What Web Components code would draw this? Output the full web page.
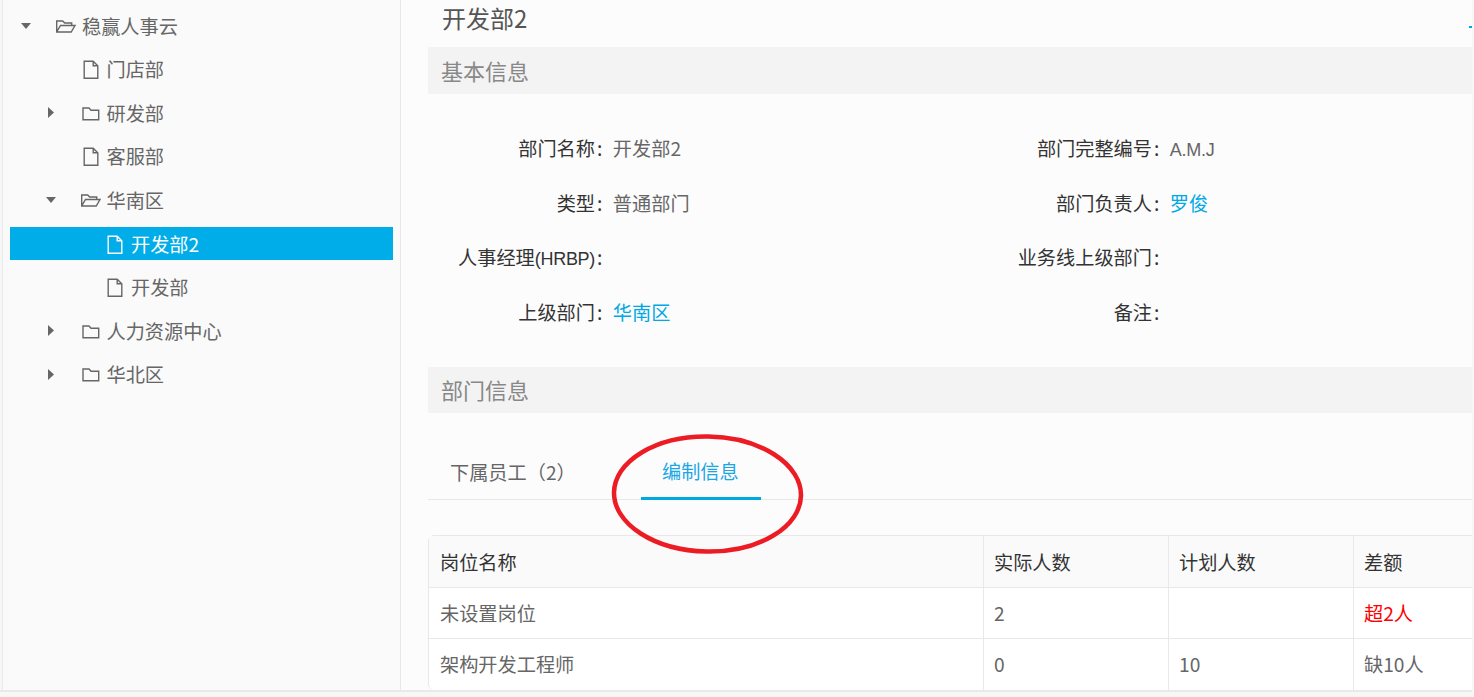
<!DOCTYPE html>
<html>
<head>
<meta charset="utf-8">
<style>
  html, body { margin: 0; height: 100%; overflow: hidden; }
  body {
    background: #f7f7f7;
    font-family: "Noto Sans CJK SC", "Liberation Sans", sans-serif;
    font-size: 19.2px;
    color: #666;
  }
</style>
</head>
<body>
<org-page>
  <org-tree slot="tree">
    <tree-node icon="open" arrow="down" level="0">稳赢人事云</tree-node>
    <tree-node icon="file" level="1">门店部</tree-node>
    <tree-node icon="folder" arrow="right" level="1">研发部</tree-node>
    <tree-node icon="file" level="1">客服部</tree-node>
    <tree-node icon="open" arrow="down" level="1">华南区</tree-node>
    <tree-node icon="file" level="2" selected>开发部2</tree-node>
    <tree-node icon="file" level="2">开发部</tree-node>
    <tree-node icon="folder" arrow="right" level="1">人力资源中心</tree-node>
    <tree-node icon="folder" arrow="right" level="1">华北区</tree-node>
  </org-tree>
  <dept-detail slot="detail"></dept-detail>
</org-page>

<script>
class OrgPage extends HTMLElement {
  constructor() {
    super();
    this.attachShadow({ mode: "open" });
    this.shadowRoot.innerHTML = `
      <style>
        :host { display: flex; height: 690px; width: 1472px; overflow: hidden; border-bottom: 2px solid #e9e9e9; }
        .side { width: 397px; flex: none; margin-left: 2px; background: #fafafa;
                border-left: 1px solid #e8e8e8; border-right: 1px solid #e8e8e8; }
        .main { flex: 1; min-width: 0; overflow: hidden; background: #fcfcfc; }
      </style>
      <div class="side"><slot name="tree"></slot></div>
      <div class="main"><slot name="detail"></slot></div>
    `;
  }
}
customElements.define("org-page", OrgPage);

class OrgTree extends HTMLElement {
  constructor() {
    super();
    this.attachShadow({ mode: "open" });
    this.shadowRoot.innerHTML = `
      <style>
        :host { display: flex; flex-direction: column; gap: 10.6px; padding: 9.2px 7px 0 7px; }
      </style>
      <slot></slot>
    `;
  }
}
customElements.define("org-tree", OrgTree);

const treeIcons = {
  open: `<path d="M.7 16V5h6l2 2h7v2.5M.7 16h14.5L19 9.5H4.5L.7 16z"/>`,
  folder: `<path d="M2 5h6l2 2.2h7.7v9.6H2z"/>`,
  file: `<path d="M3.2 2.2h9l4.6 4.6v12.5H3.2zM12.2 2.2v4.6h4.6"/>`,
};

class TreeNode extends HTMLElement {
  constructor() {
    super();
    this.attachShadow({ mode: "open" });
  }

  connectedCallback() {
    const level = Number(this.getAttribute("level"));
    const icon = this.getAttribute("icon");
    const arrow = this.getAttribute("arrow");
    let arrowSvg = "";
    if (arrow === "down") arrowSvg = `<svg width="10" height="6" viewBox="0 0 10 6"><path d="M0 0h10L5 6z" fill="#666"/></svg>`;
    if (arrow === "right") arrowSvg = `<svg width="6" height="11" viewBox="0 0 6 11"><path d="M0 0l6 5.5L0 11z" fill="#666"/></svg>`;
    this.shadowRoot.innerHTML = `
      <style>
        :host { display: flex; align-items: center; height: 33px; color: #666; padding-left: ${level * 24.5}px; }
        :host([selected]) { background: #00ade8; color: #fff; }
        .arrow { width: 18px; margin-left: 7px; display: flex; justify-content: center; flex: none; }
        .icon { width: 26px; margin-left: 21px; display: flex; flex: none; }
        svg.i { fill: none; stroke: currentColor; stroke-width: 1.4; }
      </style>
      <span class="arrow">${arrowSvg}</span>
      <span class="icon"><svg class="i" width="22" height="20" viewBox="0 0 22 20">${treeIcons[icon]}</svg></span>
      <span class="label"><slot></slot></span>
    `;
  }
}
customElements.define("tree-node", TreeNode);

class SectionBar extends HTMLElement {
  constructor() {
    super();
    this.attachShadow({ mode: "open" });
    this.shadowRoot.innerHTML = `
      <style>
        :host { display: flex; align-items: center; box-sizing: border-box; height: 47px; padding: 0 0 2px 13px;
                background: #f3f3f3; color: #888; font-size: 22px; }
      </style>
      <slot></slot>
    `;
  }
}
customElements.define("section-bar", SectionBar);

class InfoField extends HTMLElement {
  constructor() {
    super();
    this.attachShadow({ mode: "open" });
    this.shadowRoot.innerHTML = `
      <style>
        :host { display: flex; align-items: center; box-sizing: border-box; height: 54.5px; padding-bottom: 2px; }
        .label { width: var(--label-w); text-align: right; color: #333; flex: none; }
        .colon { margin: 0 10.5px 0 2px; color: #333; }
        .value { color: #666; }
        :host([link]) .value { color: #00a8e6; }
      </style>
      <span class="label"><slot name="label"></slot></span><span class="colon">:</span>
      <span class="value"><slot></slot></span>
    `;
  }
}
customElements.define("info-field", InfoField);

class TabBar extends HTMLElement {
  constructor() {
    super();
    this.attachShadow({ mode: "open" });
    this.shadowRoot.innerHTML = `
      <style>
        :host { display: flex; height: 52px; border-bottom: 1px solid #e8e8e8; }
        .tab { width: 213px; box-sizing: border-box; padding: 11px 0 0 22px; color: #666; flex: none; }
        .tab.on { width: 120px; padding: 10px 0 0 21px; color: #1ba6e6; height: 53px; border-bottom: 3px solid #00a8e0; }
      </style>
      <div class="tab">下属员工（2）</div>
      <div class="tab on">编制信息</div>
    `;
  }
}
customElements.define("tab-bar", TabBar);

class StaffTable extends HTMLElement {
  constructor() {
    super();
    this.attachShadow({ mode: "open" });
    this.shadowRoot.innerHTML = `
      <style>
        :host { display: block; width: 1110px; }
        .wrap { display: grid; grid-template-columns: 555px 185px 185px 185px; background: #fff;
                border: 1px solid #e8e8e8; border-bottom: 0; border-radius: 6px 0 6px 6px; color: #666; }
        .c { height: 51px; box-sizing: border-box; padding: 0 10px; display: flex; align-items: center;
             border-bottom: 1px solid #e8e8e8; border-right: 1px solid #e8e8e8; }
        .first { padding-left: 11px; }
        .h { background: #fafafa; color: #333; height: 52px; }
        .last { border-bottom: 0; padding-bottom: 2px; }
        .red { color: #f00; }
      </style>
      <div class="wrap">
        <div class="c h first">岗位名称</div><div class="c h">实际人数</div><div class="c h">计划人数</div><div class="c h">差额</div>
        <div class="c first">未设置岗位</div><div class="c">2</div><div class="c"></div><div class="c red">超2人</div>
        <div class="c last first">架构开发工程师</div><div class="c last">0</div><div class="c last">10</div><div class="c last">缺10人</div>
      </div>
    `;
  }
}
customElements.define("staff-table", StaffTable);

class DeptDetail extends HTMLElement {
  constructor() {
    super();
    this.attachShadow({ mode: "open" });
    this.shadowRoot.innerHTML = `
      <style>
        :host { display: block; position: relative; padding-left: 27px; height: 100%; }
        .title { height: 47px; padding-left: 14px; font-size: 24px; color: #555; line-height: 36px; }
        .grid { display: grid; grid-template-columns: 552px 1fr; padding: 28px 0 27px; }
        .c1 { --label-w: 167px; }
        .c2 { --label-w: 172px; }
        .latin { font-family: "Liberation Sans", sans-serif; font-size: 18px; letter-spacing: -0.3px; }
        section-bar.second { height: 46px; }
        tab-bar { margin-top: 34px; }
        staff-table { margin-top: 35px; }
        .mark { position: absolute; left: 209px; top: 434px; pointer-events: none; }
        .dash { position: absolute; right: 0; top: 26px; width: 3px; height: 2px; background: #00a8e6; }
      </style>
      <div class="title">开发部2</div>
      <div class="dash"></div>
      <section-bar>基本信息</section-bar>
      <div class="grid">
        <info-field class="c1"><span slot="label">部门名称</span>开发部2</info-field>
        <info-field class="c2"><span slot="label">部门完整编号</span><span class="latin">A.M.J</span></info-field>
        <info-field class="c1"><span slot="label">类型</span>普通部门</info-field>
        <info-field class="c2" link><span slot="label">部门负责人</span>罗俊</info-field>
        <info-field class="c1"><span slot="label">人事经理<span class="latin">(HRBP)</span></span></info-field>
        <info-field class="c2"><span slot="label">业务线上级部门</span></info-field>
        <info-field class="c1" link><span slot="label">上级部门</span>华南区</info-field>
        <info-field class="c2"><span slot="label">备注</span></info-field>
      </div>
      <section-bar class="second">部门信息</section-bar>
      <tab-bar></tab-bar>
      <staff-table></staff-table>
      <svg class="mark" width="196" height="122" viewBox="0 0 196 122" fill="none">
        <ellipse cx="97.5" cy="60" rx="93.5" ry="57.5" stroke="#ed1c24" stroke-width="4.5" transform="rotate(1 97.5 60)"/>
      </svg>
    `;
  }
}
customElements.define("dept-detail", DeptDetail);
</script>
</body>
</html>
